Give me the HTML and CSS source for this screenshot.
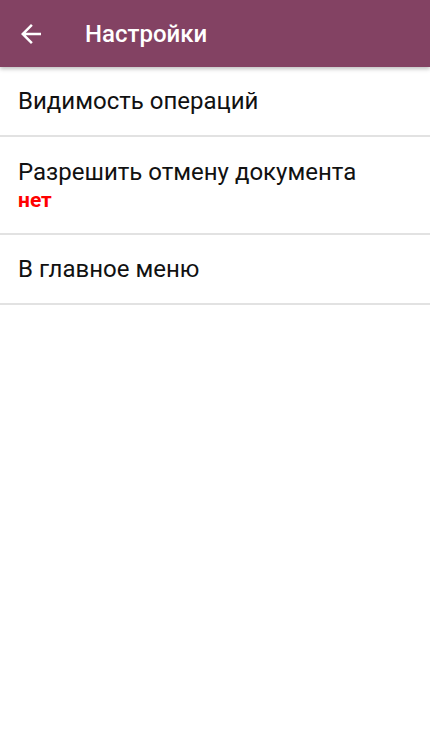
FILE: index.html
```html
<!DOCTYPE html>
<html lang="ru">
<head>
<meta charset="utf-8">
<link rel="stylesheet" href="styles.css">
</head>
<body>
<header class="toolbar">
  <button class="back" aria-label="Назад">
    <svg viewBox="0 0 24 24" width="30" height="30"><path fill="#fff" d="M20 11H7.83l5.59-5.59L12 4l-8 8 8 8 1.41-1.41L7.83 13H20v-2z"/></svg>
  </button>
  <h1 class="title">Настройки</h1>
</header>
<ul class="list">
  <li class="item"><span class="label">Видимость операций</span></li>
  <li class="item item-two"><span class="label">Разрешить отмену документа</span><span class="value">нет</span></li>
  <li class="item"><span class="label">В главное меню</span></li>
</ul>
</body>
</html>
```
FILE: styles.css
```css
html, body {
  margin: 0;
  padding: 0;
  background: #fff;
  font-family: Roboto, "Noto Sans", sans-serif;
}
.toolbar {
  height: 67px;
  background: #834263;
  display: flex;
  align-items: center;
  box-shadow: 0 2px 4px rgba(0,0,0,0.25);
  position: relative;
  z-index: 1;
}
.back {
  width: 30px;
  height: 30px;
  margin-left: 16px;
  padding: 0;
  border: 0;
  background: none;
  display: flex;
}
.title {
  margin: 0 0 0 39px;
  color: #fff;
  font-size: 24px;
  font-weight: 500;
}
.list {
  list-style: none;
  margin: 0;
  padding: 0;
}
.item {
  display: flex;
  flex-direction: column;
  justify-content: center;
  height: 68px;
  padding: 0 18px;
  border-bottom: 2px solid #e2e2e2;
}
.item-two {
  height: 96px;
}
.label {
  font-size: 24px;
  line-height: 30px;
  color: #111;
}
.value {
  font-size: 21px;
  font-weight: 700;
  color: #f00;
  line-height: 26px;
}
```
